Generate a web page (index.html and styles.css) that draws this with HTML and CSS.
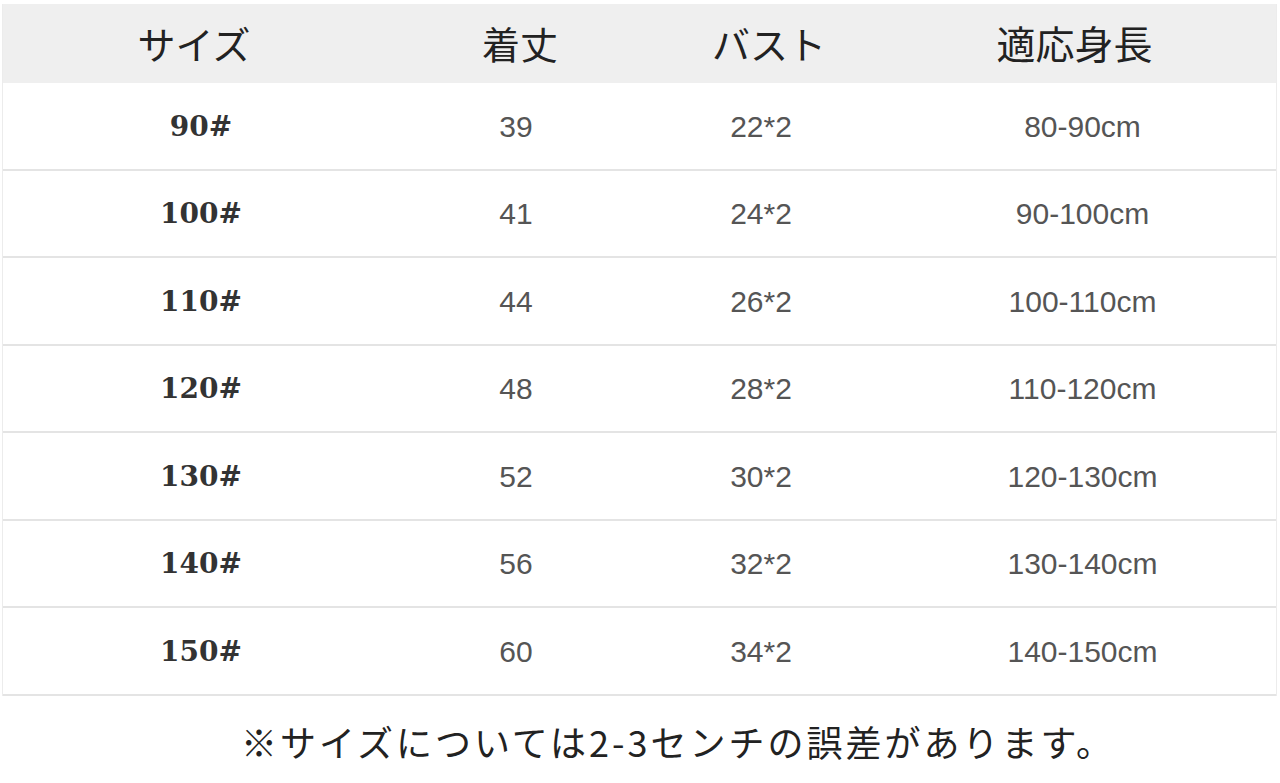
FILE: index.html
```html
<!DOCTYPE html>
<html lang="ja">
<head>
<meta charset="utf-8">
<title>サイズ表</title>
<link rel="stylesheet" href="styles.css">
</head>
<body>
<div class="sheet">
  <div class="table">
    <div class="head">
      <div class="hc">サイズ</div>
      <div class="hc">着丈</div>
      <div class="hc">バスト</div>
      <div class="hc">適応身長</div>
    </div>
    <div class="row"><div class="size">90#</div><div class="num">39</div><div class="num">22*2</div><div class="num">80-90cm</div></div>
    <div class="row"><div class="size">100#</div><div class="num">41</div><div class="num">24*2</div><div class="num">90-100cm</div></div>
    <div class="row"><div class="size">110#</div><div class="num">44</div><div class="num">26*2</div><div class="num">100-110cm</div></div>
    <div class="row"><div class="size">120#</div><div class="num">48</div><div class="num">28*2</div><div class="num">110-120cm</div></div>
    <div class="row"><div class="size">130#</div><div class="num">52</div><div class="num">30*2</div><div class="num">120-130cm</div></div>
    <div class="row"><div class="size">140#</div><div class="num">56</div><div class="num">32*2</div><div class="num">130-140cm</div></div>
    <div class="row"><div class="size">150#</div><div class="num">60</div><div class="num">34*2</div><div class="num">140-150cm</div></div>
  </div>
  <p class="note">※サイズについては2-3センチの誤差があります。</p>
</div>
</body>
</html>
```
FILE: styles.css
```css
html, body {
  margin: 0;
  padding: 0;
  background: #ffffff;
}

.sheet {
  width: 1280px;
  height: 783px;
  overflow: hidden;
}

.table {
  margin: 4px 3px 0 2px;
  border-left: 1px solid #ececec;
  border-right: 1px solid #ececec;
}

.head {
  display: grid;
  grid-template-columns: 382px 270px 228px 1fr;
  height: 79px;
  align-items: center;
  background: #efefef;
  font-family: "Noto Sans CJK JP", "Noto Sans CJK SC", sans-serif;
  font-size: 38px;
  color: #222222;
}

.hc {
  text-align: center;
  line-height: 1;
  padding-bottom: 2px;
}

.hc:last-child {
  padding-right: 10px;
  font-size: 39px;
}

.row {
  display: grid;
  grid-template-columns: 396px 234px 256px 1fr;
  height: 85.5px;
  align-items: center;
  border-bottom: 2px solid #e4e4e4;
}

.size {
  text-align: center;
  font-family: "DejaVu Serif", serif;
  font-weight: bold;
  font-size: 28px;
  color: #333333;
  line-height: 1;
  padding-top: 2px;
}

.num {
  text-align: center;
  font-family: "Liberation Sans Narrow", "Liberation Sans", sans-serif;
  font-size: 30px;
  color: #555555;
  line-height: 1;
  padding-top: 2px;
}

.note {
  margin: 0;
  padding-top: 27px;
  padding-left: 76px;
  text-align: center;
  font-family: "Noto Sans CJK JP", sans-serif;
  font-size: 36px;
  letter-spacing: 3px;
  line-height: 1;
  color: #222222;
}
```
